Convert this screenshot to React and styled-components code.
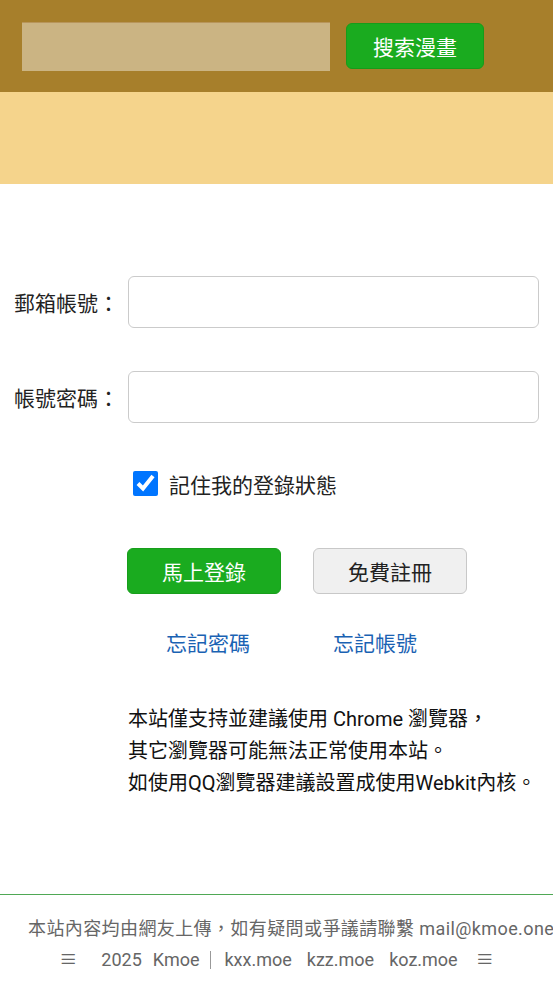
import React from "react";
import styled, { createGlobalStyle } from "styled-components";

const GlobalStyle = createGlobalStyle`
  body {
    margin: 0;
    background: #fff;
    font-family: Roboto, "Noto Sans CJK TC", "Noto Sans", sans-serif;
    color: #222;
  }
`;

const Header = styled.header`
  height: 92px;
  background-color: #a77f2b;
  display: flex;
  align-items: center;
  padding-left: 22px;
  gap: 16px;
  box-sizing: border-box;
`;

const SearchInput = styled.input`
  width: 308px;
  height: 49px;
  box-sizing: border-box;
  border: 0;
  border-top: 1px solid #b8955a;
  background-color: #cbb483;
  outline: none;
`;

const SearchButton = styled.button`
  width: 138px;
  height: 46px;
  border: 1px solid #169c1a;
  border-radius: 6px;
  background-color: #1aab1f;
  color: #fff;
  font-family: inherit;
  font-size: 21px;
  padding: 0;
`;

const Banner = styled.div`
  height: 92px;
  background-color: #f5d48c;
`;

const Form = styled.form`
  margin-top: 92px;
  display: flex;
  flex-direction: column;
`;

const Row = styled.div`
  display: flex;
  align-items: center;
  margin-top: ${(p) => p.$top || 0}px;
`;

const Label = styled.label`
  width: 128px;
  padding-left: 14px;
  box-sizing: border-box;
  font-size: 21px;
  color: #222;
`;

const Field = styled.input`
  width: 411px;
  height: 52px;
  box-sizing: border-box;
  border: 1.5px solid #cbcbcb;
  border-radius: 6px;
  background: #fff;
  outline: none;
`;

const Remember = styled.label`
  display: flex;
  align-items: center;
  margin-left: 133px;
  font-size: 21px;
  color: #222;
  gap: 11px;
  height: 25px;
`;

const Check = styled.input`
  width: 25px;
  height: 25px;
  margin: 0;
`;

const Buttons = styled.div`
  display: flex;
  gap: 32px;
  margin-left: 127px;
`;

const ActionButton = styled.button`
  width: 154px;
  height: 46px;
  border-radius: 6px;
  font-family: inherit;
  font-size: 21px;
  padding: 0;
  border: 1.5px solid ${(p) => (p.$primary ? "#189e1c" : "#c8c8c8")};
  background-color: ${(p) => (p.$primary ? "#1aab1f" : "#f0f0f0")};
  color: ${(p) => (p.$primary ? "#fff" : "#222")};
`;

const Links = styled.div`
  display: flex;
  gap: 83px;
  margin-left: 166px;
  line-height: 24px;
`;

const Link = styled.a`
  font-size: 21px;
  color: #1a62b3;
  text-decoration: none;
`;

const Notice = styled.p`
  margin: 47px 0 0 128px;
  font-size: 20px;
  line-height: 32px;
  color: #111;
  white-space: nowrap;
`;

const Footer = styled.footer`
  margin-top: 95px;
  border-top: 1px solid #4fa855;
  padding: 18px 28px 0;
  text-align: center;
  font-size: 18px;
  line-height: 31px;
  color: #666;
  white-space: nowrap;
  overflow: hidden;
`;

const FooterLine = styled.div`
  display: flex;
  justify-content: ${(p) => (p.$center ? "center" : "flex-start")};
  align-items: center;
  letter-spacing: ${(p) => (p.$center ? "0" : "0.4px")};
`;

const FooterItem = styled.span`
  margin-right: ${(p) => p.$after ?? 0}px;
  ${(p) => p.$divider && "border-left: 1px solid #999; padding-left: 13px; line-height: 18px;"}
`;

export default function App() {
  return (
    <>
      <GlobalStyle />
      <Header>
        <SearchInput type="text" />
        <SearchButton>搜索漫畫</SearchButton>
      </Header>
      <Banner />
      <Form onSubmit={(e) => e.preventDefault()}>
        <Row>
          <Label>郵箱帳號：</Label>
          <Field type="text" />
        </Row>
        <Row $top={43}>
          <Label>帳號密碼：</Label>
          <Field type="password" />
        </Row>
        <Row $top={48}>
          <Remember>
            <Check type="checkbox" defaultChecked />
            記住我的登錄狀態
          </Remember>
        </Row>
        <Row $top={52}>
          <Buttons>
            <ActionButton $primary type="button">馬上登錄</ActionButton>
            <ActionButton type="button">免費註冊</ActionButton>
          </Buttons>
        </Row>
        <Row $top={38}>
          <Links>
            <Link href="#">忘記密碼</Link>
            <Link href="#">忘記帳號</Link>
          </Links>
        </Row>
      </Form>
      <Notice>
        本站僅支持並建議使用 Chrome 瀏覽器，
        <br />
        其它瀏覽器可能無法正常使用本站。
        <br />
        如使用QQ瀏覽器建議設置成使用Webkit內核。
      </Notice>
      <Footer>
        <FooterLine>本站內容均由網友上傳，如有疑問或爭議請聯繫 mail@kmoe.one</FooterLine>
        <FooterLine $center>
          <FooterItem $after={24}>≡</FooterItem>
          <FooterItem $after={11}>2025</FooterItem>
          <FooterItem $after={11}>Kmoe</FooterItem>
          <FooterItem $divider $after={15}>kxx.moe</FooterItem>
          <FooterItem $after={15}>kzz.moe</FooterItem>
          <FooterItem $after={18}>koz.moe</FooterItem>
          <FooterItem>≡</FooterItem>
        </FooterLine>
      </Footer>
    </>
  );
}
